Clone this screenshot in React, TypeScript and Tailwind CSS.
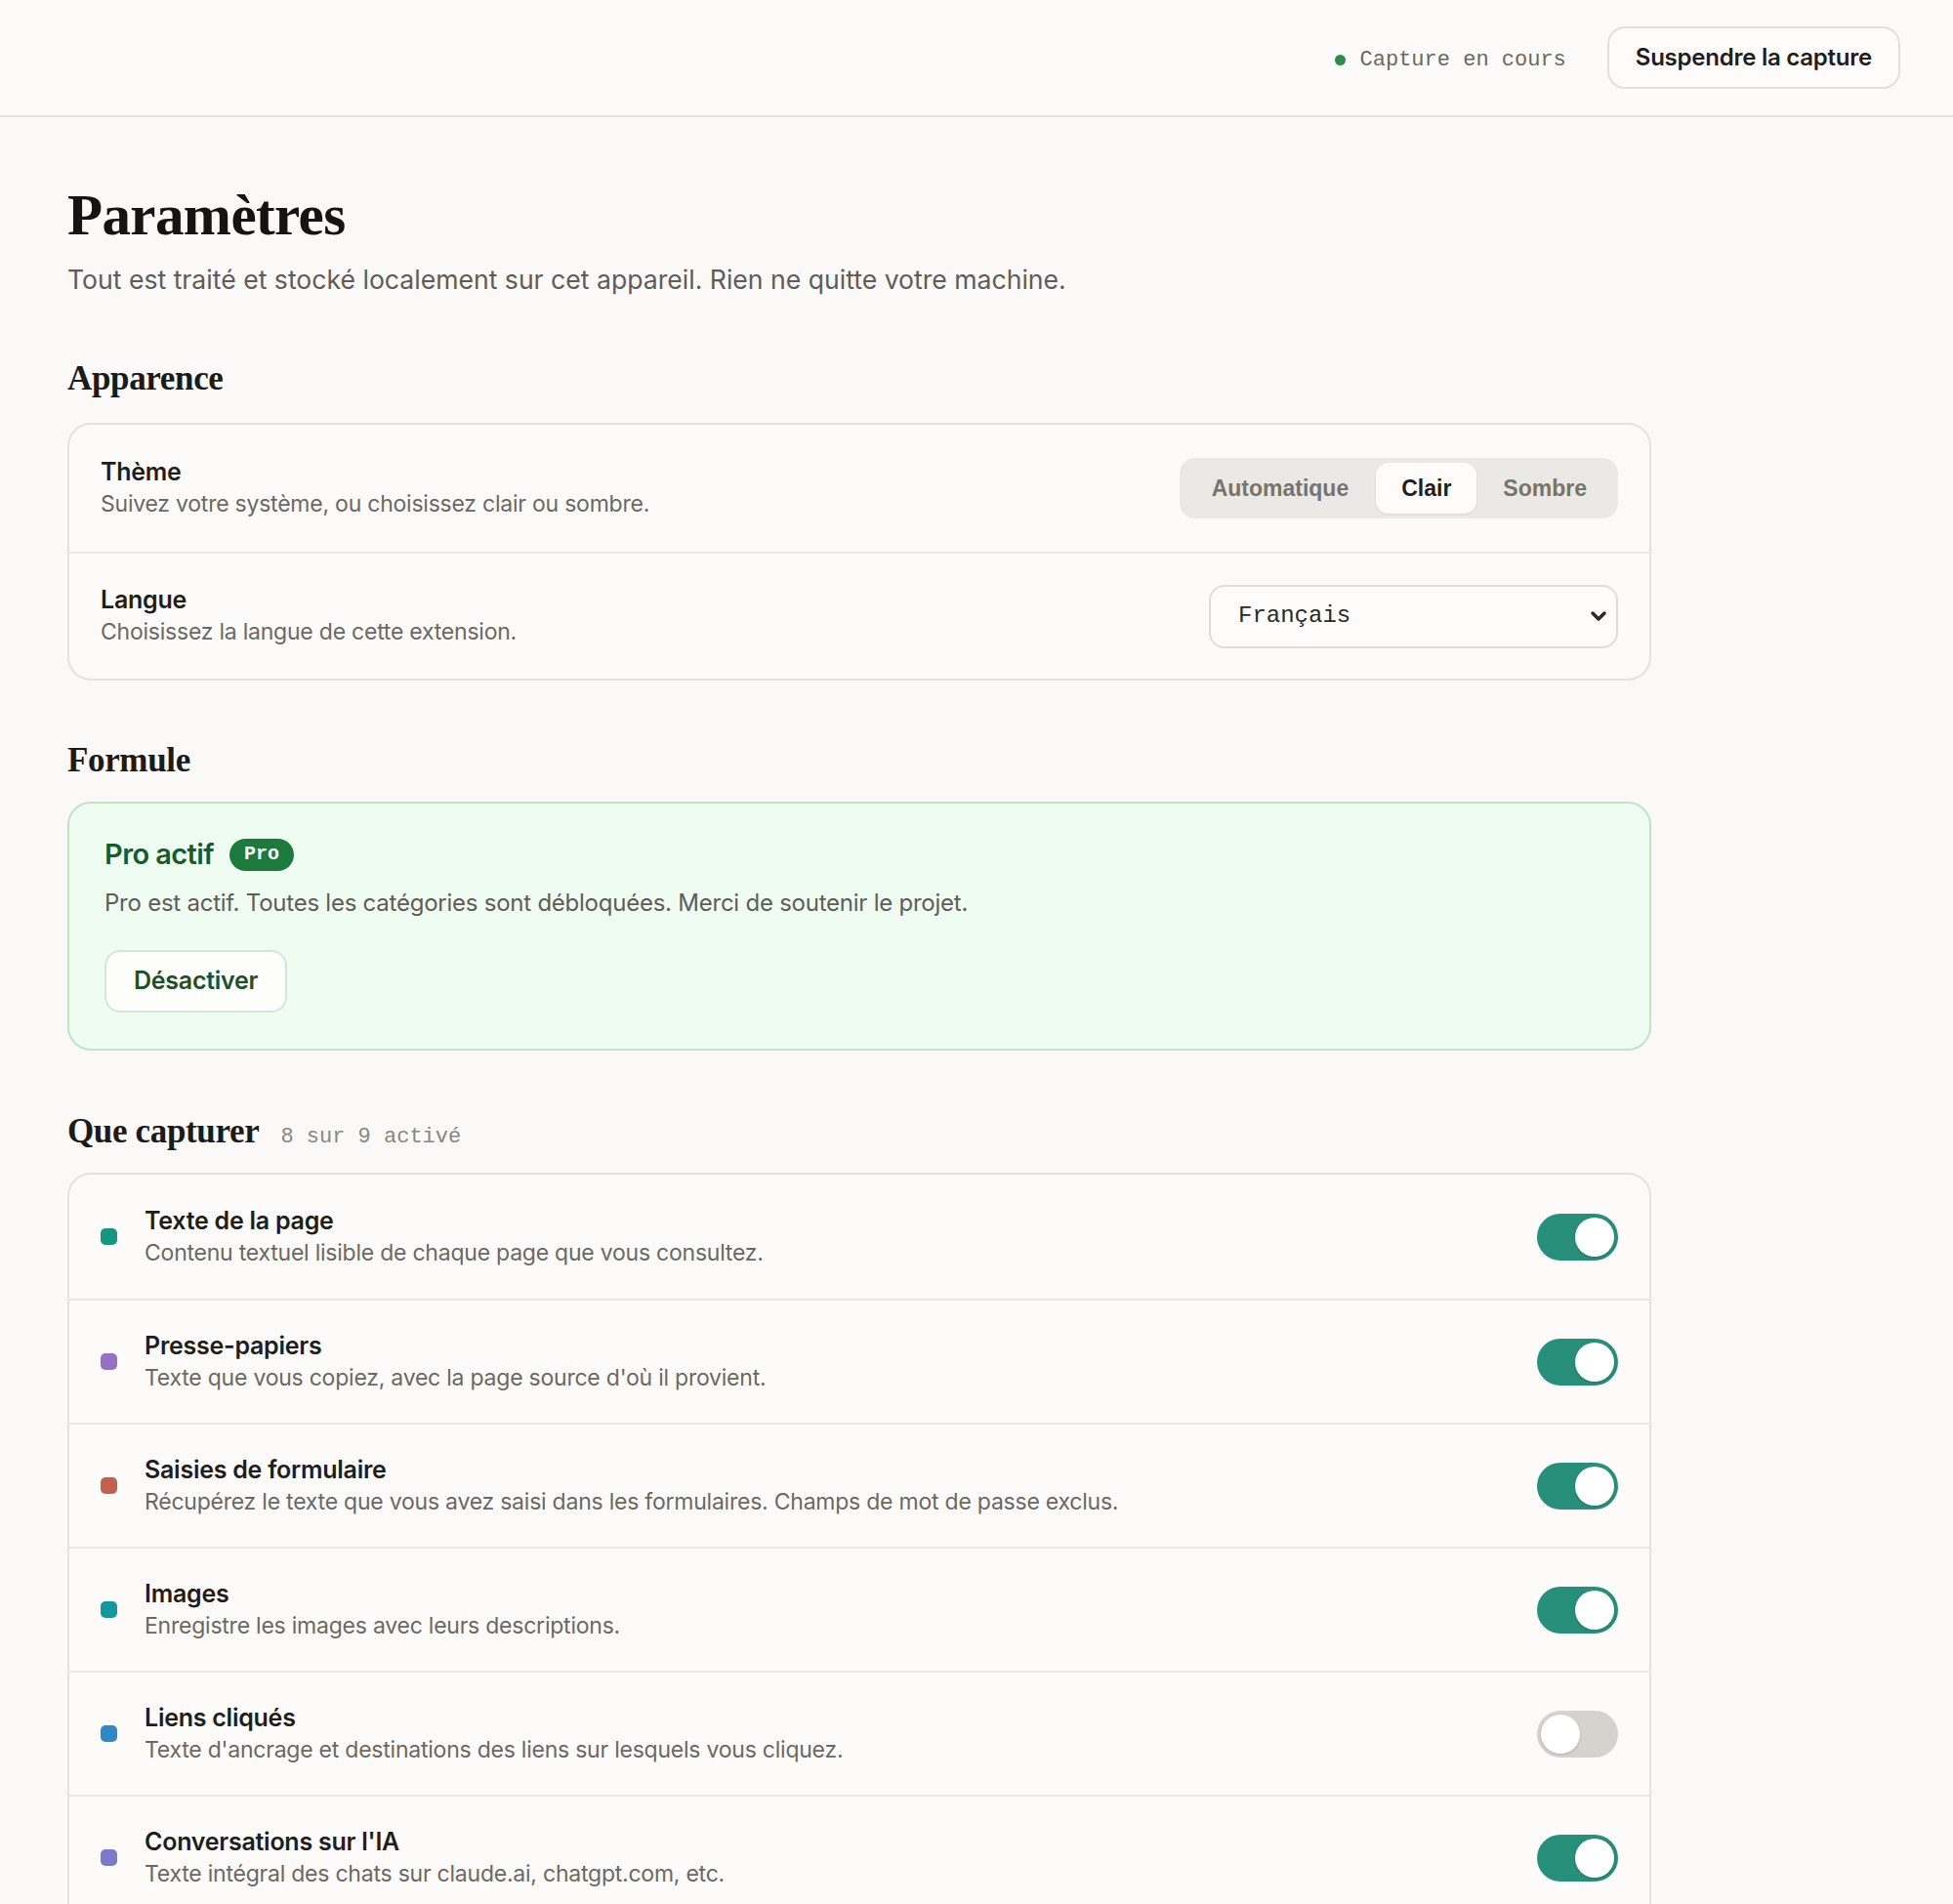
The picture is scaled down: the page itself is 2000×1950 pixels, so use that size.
import { ChevronDown } from "lucide-react";

const sans = "font-['Inter','Noto_Sans',sans-serif]";
const serif = "font-['Liberation_Serif','DejaVu_Serif',serif]";
const mono = "font-['Liberation_Mono','DejaVu_Sans_Mono',monospace]";

const categories = [
    { color: "bg-[#13977f]", title: "Texte de la page", desc: "Contenu textuel lisible de chaque page que vous consultez.", on: true },
    { color: "bg-[#9371c6]", title: "Presse-papiers", desc: "Texte que vous copiez, avec la page source d'où il provient.", on: true },
    { color: "bg-[#c2614f]", title: "Saisies de formulaire", desc: "Récupérez le texte que vous avez saisi dans les formulaires. Champs de mot de passe exclus.", on: true },
    { color: "bg-[#12999e]", title: "Images", desc: "Enregistre les images avec leurs descriptions.", on: true },
    { color: "bg-[#2d89c4]", title: "Liens cliqués", desc: "Texte d'ancrage et destinations des liens sur lesquels vous cliquez.", on: false },
    { color: "bg-[#7c79cb]", title: "Conversations sur l'IA", desc: "Texte intégral des chats sur claude.ai, chatgpt.com, etc.", on: true },
    { color: "bg-[#c98a2e]", title: "Recherches", desc: "Les requêtes que vous tapez dans les moteurs de recherche.", on: true },
    { color: "bg-[#5a9b4f]", title: "Vidéos", desc: "Titres et transcriptions des vidéos que vous regardez.", on: true },
    { color: "bg-[#b8607f]", title: "Téléchargements", desc: "Noms et sources des fichiers que vous téléchargez.", on: true },
];

function Toggle({ on }: { on: boolean }) {
    return (
        <div
            className={`w-[83px] h-[48px] rounded-full p-[4px] flex shrink-0 ${
                on ? "bg-[#28907a] justify-end" : "bg-[#d6d3cf] justify-start"
            }`}
        >
            <div className="w-[40px] h-[40px] rounded-full bg-white shadow-[0_1px_3px_rgba(0,0,0,0.18)]" />
        </div>
    );
}

function SectionTitle({ children }: { children: React.ReactNode }) {
    return <h2 className={`${serif} text-[35px] leading-[40px] font-bold text-[#1c1b19] tracking-[-0.01em]`}>{children}</h2>;
}

export default function App() {
    const enabled = categories.filter((c) => c.on).length;

    return (
        <div className={`${sans} min-h-screen bg-[#faf9f7] text-[#1f1e1c]`}>
            {/* top bar */}
            <header className="h-[120px] bg-[#fcfbfa] border-b-2 border-[#e6e3df] flex items-center justify-end gap-[42px] pr-[54px]">
                <div className="flex items-center gap-[15px] pt-[4px]">
                    <span className="w-[11px] h-[11px] rounded-full bg-[#2e8b4e]" />
                    <span className={`${mono} text-[22px] text-[#6b6862]`}>Capture en cours</span>
                </div>
                <button className="h-[64px] px-[27px] rounded-[18px] border-2 border-[#e3e0db] bg-[#fdfcfb] text-[24px] font-semibold tracking-[-0.01em] text-[#1f1e1c]">
                    Suspendre la capture
                </button>
            </header>

            <main className="px-[69px] pt-[68px] pb-20">
                <div className="w-[1622px]">
                    <h1 className={`${serif} text-[59px] leading-[64px] font-bold text-[#151412] tracking-[-0.01em]`}>Paramètres</h1>
                    <p className="mt-[16px] text-[26.6px] leading-[36px] text-[#5f5c57]">
                        Tout est traité et stocké localement sur cet appareil. Rien ne quitte votre machine.
                    </p>

                    {/* Apparence */}
                    <section className="mt-[64px]">
                        <SectionTitle>Apparence</SectionTitle>
                        <div className="mt-[25px] rounded-[24px] border-2 border-[#e6e3de] bg-[#fcfbfa]">
                            <div className="h-[130px] flex items-center justify-between px-[32px]">
                                <div>
                                    <div className="text-[25px] leading-[32px] font-semibold tracking-[-0.01em]">Thème</div>
                                    <div className="text-[23px] leading-[34px] text-[#6b6862] tracking-[-0.01em]">Suivez votre système, ou choisissez clair ou sombre.</div>
                                </div>
                                <div className="flex items-center p-[5px] rounded-[16px] bg-[#ebe9e6] font-['Liberation_Sans',Arial,sans-serif] font-bold text-[23px]">
                                    <span className="h-[52px] flex items-center px-[28px] text-[#77736d]">Automatique</span>
                                    <span className="h-[52px] flex items-center px-[26px] rounded-[13px] bg-[#fdfcfb] text-[#1f1e1c] shadow-[0_1px_3px_rgba(0,0,0,0.08)]">Clair</span>
                                    <span className="h-[52px] flex items-center px-[27px] text-[#77736d]">Sombre</span>
                                </div>
                            </div>
                            <div className="h-[130px] flex items-center justify-between px-[32px] border-t-2 border-[#ebe8e4]">
                                <div>
                                    <div className="text-[25px] leading-[32px] font-semibold tracking-[-0.01em]">Langue</div>
                                    <div className="text-[23px] leading-[34px] text-[#6b6862] tracking-[-0.01em]">Choisissez la langue de cette extension.</div>
                                </div>
                                <div className="w-[419px] h-[65px] rounded-[16px] border-2 border-[#e0ddd8] bg-[#fdfcfb] flex items-center justify-between pl-[28px] pr-[6px]">
                                    <span className={`${mono} text-[24px] text-[#2a2926]`}>Français</span>
                                    <ChevronDown className="w-[24px] h-[24px] text-[#2a2926]" strokeWidth={3.5} />
                                </div>
                            </div>
                        </div>
                    </section>

                    {/* Formule */}
                    <section className="mt-[62px]">
                        <SectionTitle>Formule</SectionTitle>
                        <div className="mt-[22px] rounded-[24px] border-2 border-[#c2e2c9] bg-[#effcf2] px-[36px] pt-[34px] pb-[37px]">
                            <div className="flex items-center gap-[16px]">
                                <span className="text-[29px] leading-[36px] font-semibold text-[#175c2b] tracking-[-0.02em]">Pro actif</span>
                                <span className={`${mono} h-[33px] px-[15px] rounded-full bg-[#1d7a3d] text-white text-[20px] font-bold flex items-center`}>Pro</span>
                            </div>
                            <p className="mt-[15px] text-[24px] leading-[34px] text-[#5f5c57] tracking-[-0.01em]">
                                Pro est actif. Toutes les catégories sont débloquées. Merci de soutenir le projet.
                            </p>
                            <button className="mt-[31px] h-[64px] px-[28px] rounded-[16px] border-2 border-[#d5e6d8] bg-[#fdfdfb] text-[25px] font-semibold text-[#1c4f2a] tracking-[-0.01em]">
                                Désactiver
                            </button>
                        </div>
                    </section>

                    {/* Que capturer */}
                    <section className="mt-[63px]">
                        <div className="flex items-baseline gap-[22px]">
                            <SectionTitle>Que capturer</SectionTitle>
                            <span className={`${mono} text-[22px] text-[#8a8680]`}>
                                {enabled} sur {categories.length} activé
                            </span>
                        </div>
                        <div className="mt-[20px] rounded-[24px] border-2 border-[#e6e3de] bg-[#fcfbfa]">
                            {categories.map((c, i) => (
                                <div
                                    key={c.title}
                                    className={`h-[127px] flex items-center px-[32px] ${i > 0 ? "border-t-2 border-[#ebe8e4]" : ""}`}
                                >
                                    <span className={`w-[17px] h-[17px] rounded-[5px] shrink-0 ${c.color}`} />
                                    <div className="ml-[28px] flex-1">
                                        <div className="text-[25px] leading-[32px] font-semibold tracking-[-0.01em]">{c.title}</div>
                                        <div className="text-[23px] leading-[34px] text-[#6b6862] tracking-[-0.01em]">{c.desc}</div>
                                    </div>
                                    <Toggle on={c.on} />
                                </div>
                            ))}
                        </div>
                    </section>
                </div>
            </main>
        </div>
    );
}
